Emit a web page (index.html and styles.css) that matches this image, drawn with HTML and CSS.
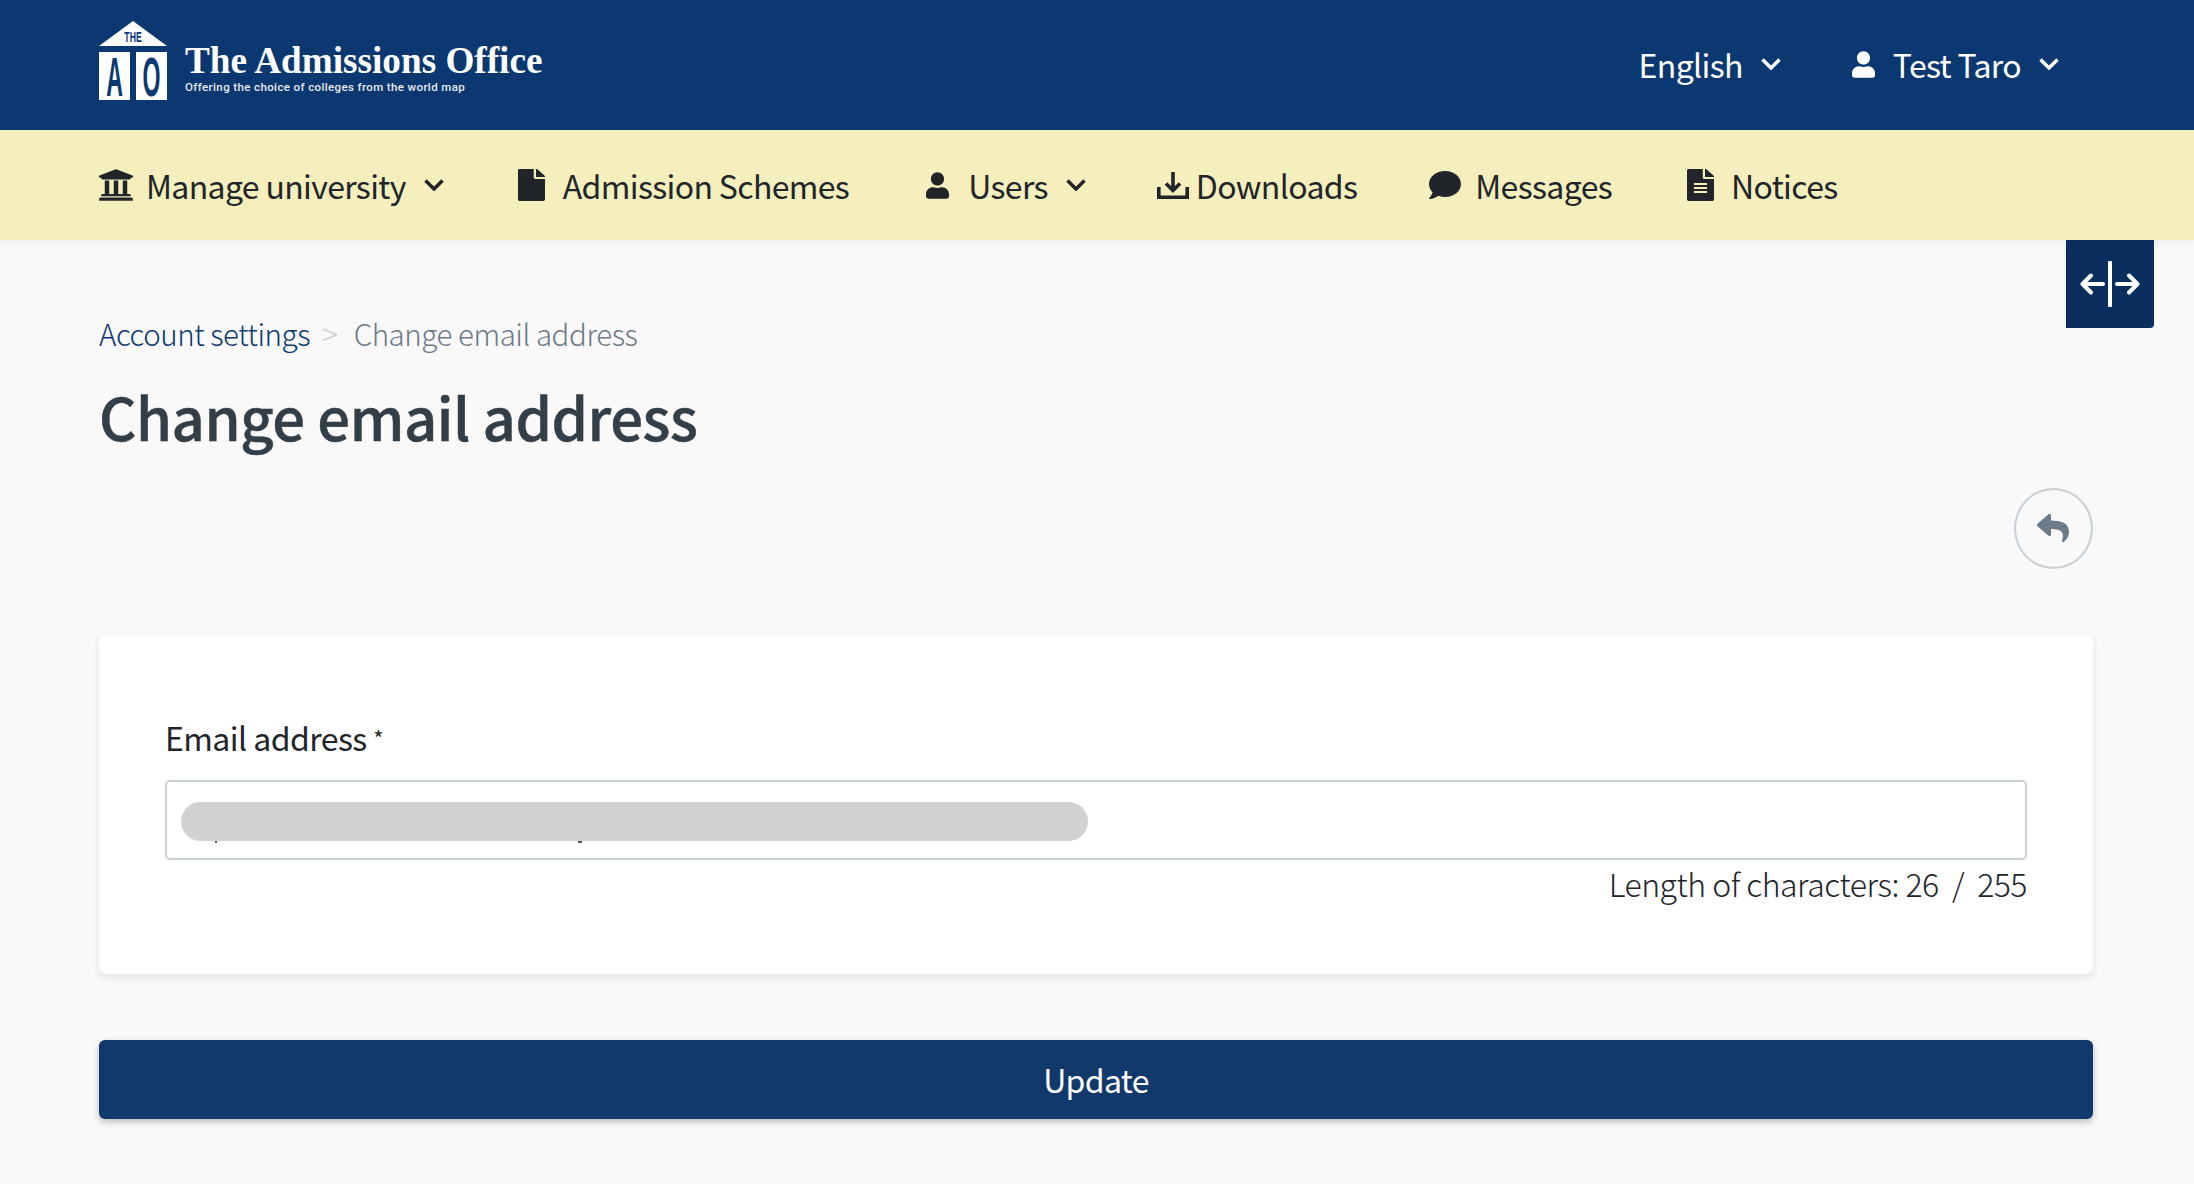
FILE: index.html
```html
<!DOCTYPE html>
<html lang="en">
<head>
<meta charset="utf-8">
<title>Change email address</title>
<link rel="stylesheet" href="styles.css">
</head>
<body>
<header class="topbar">
  <a class="brand">
    <svg class="brand-mark" viewBox="0 0 68 80" aria-hidden="true">
      <path class="mark-fill" d="M34 0 68 25H0z"/>
      <g transform="translate(34 21) scale(.62 1)"><text class="mark-the">THE</text></g>
      <rect class="mark-fill" x="0" y="31" width="31" height="48"/>
      <rect class="mark-fill" x="37" y="31" width="31" height="48"/>
      <g transform="translate(15.500 75) scale(.42 1)"><text class="mark-letter">A</text></g>
      <g transform="translate(52.500 75) scale(.42 1)"><text class="mark-letter">O</text></g>
    </svg>
    <span class="brand-text">
      <span class="brand-name">The Admissions Office</span>
      <span class="brand-tag">Offering the choice of colleges from the world map</span>
    </span>
  </a>
  <nav class="top-menu">
    <span class="top-item">English
      <svg class="chev" viewBox="0 0 20 12"><path d="M1.500 1.500 10 10l8.500-8.500"/></svg>
    </span>
    <span class="top-item top-user">
      <svg class="ico-user" viewBox="0 0 448 512"><path d="M224 256c70.700 0 128-57.300 128-128S294.700 0 224 0 96 57.300 96 128s57.300 128 128 128zm89.600 32h-16.700c-22.200 10.200-46.900 16-72.900 16s-50.600-5.800-72.900-16h-16.700C60.200 288 0 348.200 0 422.400V464c0 26.500 21.500 48 48 48h352c26.500 0 48-21.500 48-48v-41.600c0-74.200-60.200-134.400-134.400-134.400z"/></svg>
      <span>Test Taro</span>
      <svg class="chev" viewBox="0 0 20 12"><path d="M1.500 1.500 10 10l8.500-8.500"/></svg>
    </span>
  </nav>
</header>

<nav class="mainnav">
  <a class="nav-item nav-manage">
    <svg class="ico-bank" viewBox="0 0 512 512"><path d="M496 128v16a8 8 0 0 1-8 8h-24v12c0 6.627-5.373 12-12 12H60c-6.627 0-12-5.373-12-12v-12H24a8 8 0 0 1-8-8v-16a8 8 0 0 1 4.941-7.392l232-88a7.996 7.996 0 0 1 6.118 0l232 88A8 8 0 0 1 496 128zm-24 304H40c-13.255 0-24 10.745-24 24v16a8 8 0 0 0 8 8h464a8 8 0 0 0 8-8v-16c0-13.255-10.745-24-24-24zM96 192v192H60c-6.627 0-12 5.373-12 12v20h416v-20c0-6.627-5.373-12-12-12h-36V192h-64v192h-64V192h-64v192h-64V192H96z"/></svg>
    <span>Manage university</span>
    <svg class="chev" viewBox="0 0 20 12"><path d="M1.500 1.500 10 10l8.500-8.500"/></svg>
  </a>
  <a class="nav-item nav-schemes">
    <svg class="ico-doc" viewBox="0 0 384 512" preserveAspectRatio="none"><path d="M224 136V0H24C10.700 0 0 10.700 0 24v464c0 13.300 10.700 24 24 24h336c13.300 0 24-10.700 24-24V160H248c-13.200 0-24-10.800-24-24zm160-14.100v6.100H256V0h6.100c6.400 0 12.500 2.500 17 7l97.900 98c4.500 4.500 7 10.600 7 16.900z"/></svg>
    <span>Admission Schemes</span>
  </a>
  <a class="nav-item nav-users">
    <svg class="ico-user" viewBox="0 0 448 512"><path d="M224 256c70.700 0 128-57.300 128-128S294.700 0 224 0 96 57.300 96 128s57.300 128 128 128zm89.600 32h-16.700c-22.200 10.200-46.900 16-72.900 16s-50.600-5.800-72.900-16h-16.700C60.200 288 0 348.200 0 422.400V464c0 26.500 21.500 48 48 48h352c26.500 0 48-21.500 48-48v-41.600c0-74.200-60.200-134.400-134.400-134.400z"/></svg>
    <span>Users</span>
    <svg class="chev" viewBox="0 0 20 12"><path d="M1.500 1.500 10 10l8.500-8.500"/></svg>
  </a>
  <a class="nav-item nav-downloads">
    <svg class="ico-dl" viewBox="0 0 32 27"><path class="dl-line" d="M1.800 15v10.200h28.400V15"/><path class="dl-line" d="M16 0v18M9 11.500l7 7 7-7"/></svg>
    <span>Downloads</span>
  </a>
  <a class="nav-item nav-messages">
    <svg class="ico-msg" viewBox="0 0 512 512"><path d="M256 32C114.600 32 0 125.100 0 240c0 49.600 21.400 95 57 130.700C44.500 421.100 2.700 466 2.200 466.500c-2.200 2.300-2.800 5.700-1.500 8.700S4.800 480 8 480c66.300 0 116-31.800 140.600-51.400 32.700 12.300 69 19.400 107.400 19.400 141.400 0 256-93.100 256-208S397.400 32 256 32z"/></svg>
    <span>Messages</span>
  </a>
  <a class="nav-item nav-notices">
    <svg class="ico-doc" viewBox="0 0 384 512" preserveAspectRatio="none"><path d="M224 136V0H24C10.700 0 0 10.700 0 24v464c0 13.300 10.700 24 24 24h336c13.300 0 24-10.700 24-24V160H248c-13.200 0-24-10.800-24-24zm64 236c0 6.600-5.400 12-12 12H108c-6.600 0-12-5.400-12-12v-8c0-6.600 5.400-12 12-12h168c6.600 0 12 5.400 12 12v8zm0-64c0 6.600-5.400 12-12 12H108c-6.600 0-12-5.400-12-12v-8c0-6.600 5.400-12 12-12h168c6.600 0 12 5.400 12 12v8zm0-72v8c0 6.600-5.400 12-12 12H108c-6.600 0-12-5.400-12-12v-8c0-6.600 5.400-12 12-12h168c6.600 0 12 5.400 12 12zm96-114.100v6.100H256V0h6.100c6.400 0 12.500 2.500 17 7l97.900 98c4.500 4.500 7 10.600 7 16.900z"/></svg>
    <span>Notices</span>
  </a>
</nav>

<main class="content">
  <a class="width-toggle">
    <svg viewBox="0 0 60 46"><path d="M30 1.500v43M23 23H3M11 14.500 2.500 23l8.500 8.500M37 23h20M49 14.500l8.500 8.500-8.500 8.500"/></svg>
  </a>
  <ol class="crumbs">
    <li><a class="crumb-link">Account settings</a></li>
    <li class="crumb-sep">&gt;</li>
    <li class="crumb-current">Change email address</li>
  </ol>
  <h1 class="page-title">Change email address</h1>
  <div class="actions">
    <a class="back-btn">
      <svg viewBox="0 0 512 512"><path d="M8.309 189.836L184.313 37.851C199.719 24.546 224 35.347 224 56.015v80.053c160.629 1.839 288 34.032 288 186.258 0 61.441-39.581 122.309-83.333 154.132-13.653 9.931-33.111-2.533-28.077-18.631 45.344-145.012-21.507-183.510-176.590-185.742V360c0 20.700-24.300 31.453-39.687 18.164l-176.004-152c-11.071-9.562-11.086-26.753 0-36.328z"/></svg>
    </a>
  </div>
  <section class="card">
    <label class="field-label">Email address <span class="req">*</span></label>
    <div class="field-input">
      <span class="speck speck-a"></span>
      <span class="speck speck-b"></span>
      <span class="redact"></span>
    </div>
    <p class="counter">Length of characters: 26 &nbsp;/&nbsp; 255</p>
  </section>
  <button class="submit">Update</button>
</main>
</body>
</html>
```
FILE: styles.css
```css
* { box-sizing: border-box; }
html, body { margin: 0; padding: 0; }
body {
  width: 2194px;
  height: 1184px;
  overflow: hidden;
  background: #f9f9f9;
  color: #212529;
  font-family: "Noto Sans CJK JP", "Noto Sans", sans-serif;
  font-size: 32px;
  letter-spacing: -0.65px;
}

.topbar {
  height: 130px;
  background: #0b3870;
  color: #fff;
  display: flex;
  align-items: center;
  justify-content: space-between;
  padding: 0 135px 0 99px;
}
.brand { display: flex; align-items: flex-start; gap: 18px; margin-top: -9px; letter-spacing: 0; }
.brand-mark { width: 68px; height: 80px; display: block; flex: none; overflow: visible; }
.mark-fill { fill: #fff; }
.mark-the, .mark-letter { font-family: "Liberation Sans", sans-serif; font-weight: 700; fill: #0b3870; text-anchor: middle; }
.mark-the { font-size: 14px; }
.mark-letter { font-size: 55px; }
.brand-text { display: flex; flex-direction: column; margin-top: 18px; }
.brand-name { font-family: "Liberation Serif", serif; font-weight: 700; font-size: 37.200px; line-height: 44px; white-space: nowrap; }
.brand-tag { font-family: Roboto, sans-serif; font-weight: 500; font-size: 11.500px; letter-spacing: 0.38px; line-height: 14px; margin-top: -3px; white-space: nowrap; color: #e6ebf2; }

.top-menu { display: flex; align-items: center; gap: 71px; margin-top: -2px; }
.top-item { display: flex; align-items: center; gap: 18px; }
.chev { width: 20px; height: 12px; flex: none; fill: none; stroke: currentColor; stroke-width: 3.500; }
.ico-user { width: 23px; height: 27px; fill: currentColor; flex: none; }

.mainnav {
  height: 110px;
  background: #f5eebd;
  display: flex;
  align-items: center;
  padding: 0 99px;
  box-shadow: 0 4px 10px rgba(0, 0, 0, 0.05);
  position: relative;
}
.nav-item { display: flex; align-items: center; gap: 14px; white-space: nowrap; }
.nav-manage { gap: 13px; }
.nav-manage .chev { margin-left: 5px; }
.nav-schemes { margin-left: 74px; gap: 18px; }
.nav-users { margin-left: 77px; gap: 19px; }
.nav-users .chev { margin-left: -1px; }
.nav-downloads { margin-left: 71px; gap: 7px; }
.nav-messages { margin-left: 72px; gap: 14px; }
.nav-notices { margin-left: 75px; gap: 17px; }
.ico-bank { width: 36px; height: 36px; margin: 0 -1px; fill: currentColor; flex: none; }
.ico-doc { width: 27px; height: 32px; fill: currentColor; flex: none; }
.ico-dl { width: 32px; height: 27px; fill: none; flex: none; }
.dl-line { fill: none; stroke: currentColor; stroke-width: 3.600; }
.ico-msg { width: 32px; height: 32px; fill: currentColor; flex: none; }

.content { position: relative; padding: 71px 101px 0 99px; }
.width-toggle {
  position: absolute;
  top: 0;
  right: 40px;
  width: 88px;
  height: 88px;
  background: #0a2f5f;
  border-radius: 0 0 4px 0;
  display: flex;
  align-items: center;
  justify-content: center;
}
.width-toggle svg { width: 60px; height: 46px; fill: none; stroke: #fff; stroke-width: 4; stroke-linecap: round; stroke-linejoin: round; }

.crumbs { list-style: none; margin: 0; padding: 0; display: flex; align-items: center; font-size: 29.500px; letter-spacing: -0.45px; font-weight: 300; line-height: 44px; }
.crumb-link { color: #0b3870; }
.crumb-sep { color: #c6ccd2; margin: 0 16px 0 12px; font-size: 30px; }
.crumb-current { color: #6c7a89; }

.page-title { margin: 23px 0 0; font-size: 58px; letter-spacing: -0.45px; font-weight: 500; line-height: 76px; color: #323e48; -webkit-text-stroke: 0.5px #323e48; }

.actions { display: flex; justify-content: flex-end; margin-top: 34px; }
.back-btn {
  width: 79px;
  height: 81px;
  border: 2px solid #c8d0d7;
  border-radius: 50%;
  display: flex;
  align-items: center;
  justify-content: center;
}
.back-btn svg { width: 32px; height: 32px; fill: #6c7a89; margin: -1px 0 0 -2px; }

.card {
  margin-top: 66px;
  height: 339px;
  background: #fff;
  border-radius: 8px;
  box-shadow: 0 4px 10px rgba(0, 0, 0, 0.08);
  padding: 80px 66px 0;
}
.field-label { display: block; line-height: 44px; letter-spacing: -0.56px; color: #212529; }
.req { font-size: 22px; vertical-align: 4px; }
.field-input {
  position: relative;
  margin-top: 21px;
  height: 80px;
  background: #fff;
  border: 2px solid #c8d0d7;
  border-radius: 5px;
}
.redact {
  position: absolute;
  left: 14px;
  top: 20px;
  width: 907px;
  height: 39px;
  background: #d1d1d1;
  border-radius: 20px;
}
.speck { position: absolute; top: 58px; width: 2px; height: 3px; background: #555; }
.speck-a { left: 48px; }
.speck-b { left: 411px; width: 4px; }
.counter { margin: 1px 0 0; text-align: right; font-weight: 300; line-height: 44px; letter-spacing: -0.5px; color: #212529; }

.submit {
  display: block;
  width: 100%;
  height: 79px;
  margin-top: 66px;
  padding-bottom: 3px;
  background: #12396b;
  color: #fff;
  border: 0;
  border-radius: 6px;
  box-shadow: 0 3px 7px rgba(0, 0, 0, 0.25);
  font: inherit;
  letter-spacing: inherit;
}
```
